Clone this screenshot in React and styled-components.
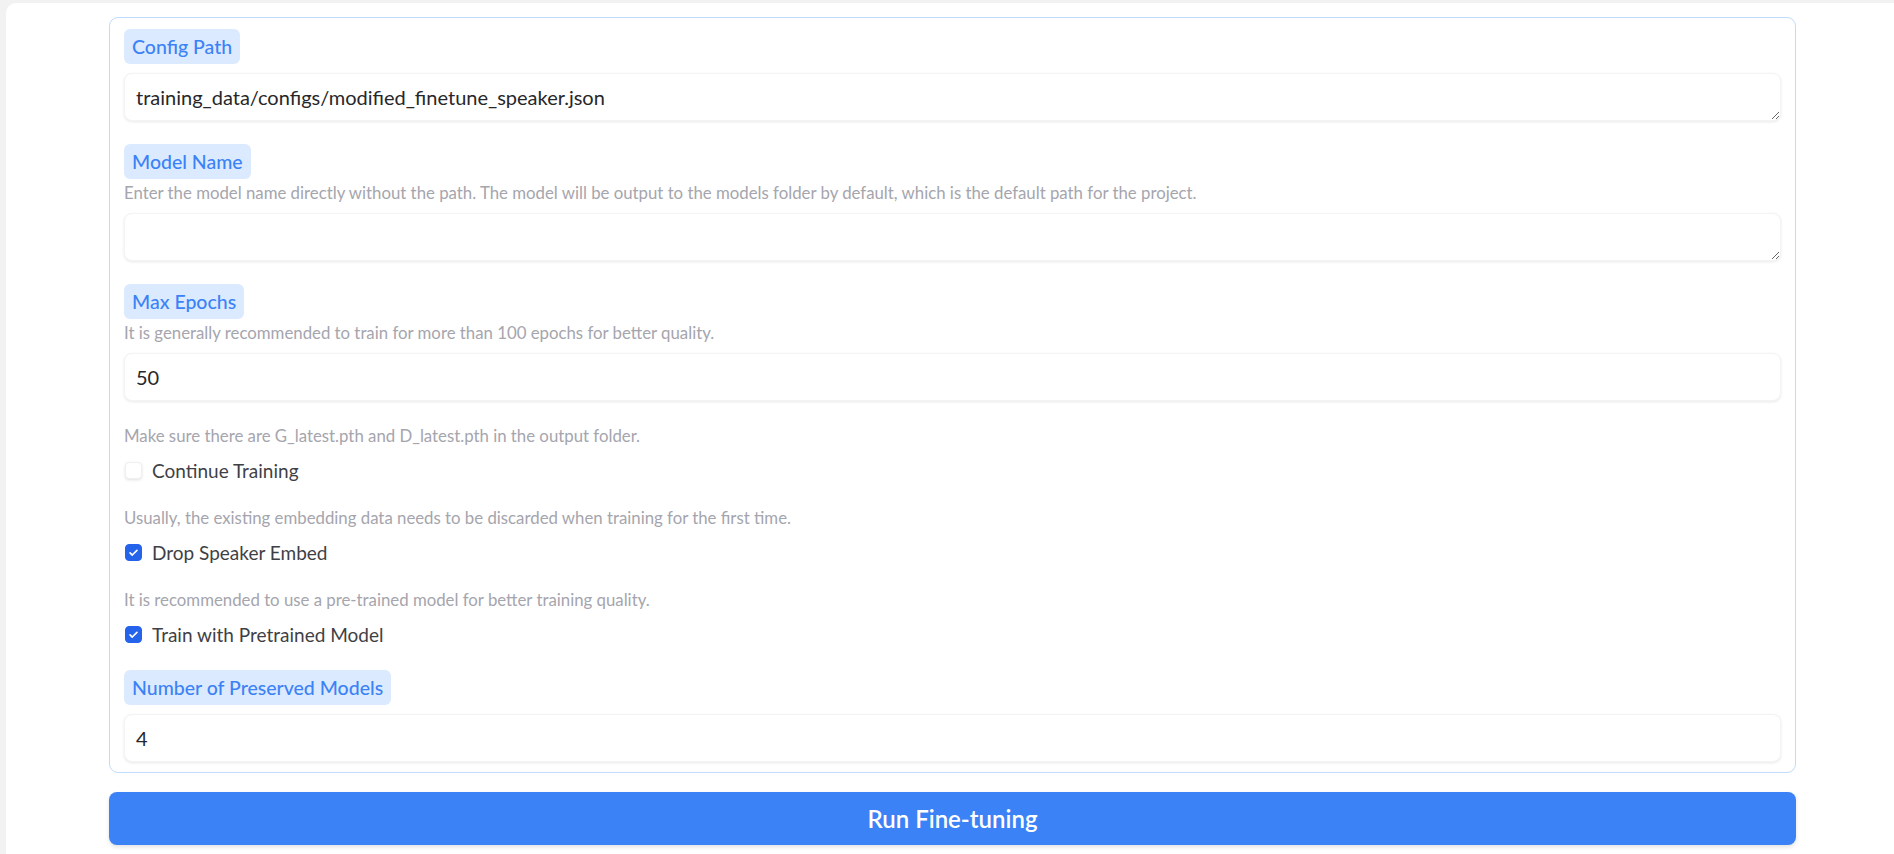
import styled, { createGlobalStyle } from "styled-components";

const GlobalStyle = createGlobalStyle`
  html, body {
    margin: 0;
    background: #f2f2f2;
    font-family: "Lato", "Noto Sans", sans-serif;
  }
`;

const fields = [
  {
    type: "textarea",
    label: "Config Path",
    value: "training_data/configs/modified_finetune_speaker.json",
  },
  {
    type: "textarea",
    label: "Model Name",
    info: "Enter the model name directly without the path. The model will be output to the models folder by default, which is the default path for the project.",
    value: "",
  },
  {
    type: "number",
    label: "Max Epochs",
    info: "It is generally recommended to train for more than 100 epochs for better quality.",
    value: "50",
  },
  {
    type: "checkbox",
    label: "Continue Training",
    info: "Make sure there are G_latest.pth and D_latest.pth in the output folder.",
    checked: false,
  },
  {
    type: "checkbox",
    label: "Drop Speaker Embed",
    info: "Usually, the existing embedding data needs to be discarded when training for the first time.",
    checked: true,
  },
  {
    type: "checkbox",
    label: "Train with Pretrained Model",
    info: "It is recommended to use a pre-trained model for better training quality.",
    checked: true,
  },
  {
    type: "number",
    label: "Number of Preserved Models",
    value: "4",
  },
];

export default function App() {
  return (
    <>
      <GlobalStyle />
      <Page>
        <Card>
          <Panel>
            {fields.map((f) =>
              f.type === "checkbox" ? (
                <CheckField key={f.label}>
                  <Info>{f.info}</Info>
                  <CheckRow>
                    <Box $checked={f.checked}>
                      {f.checked && (
                        <svg width="11" height="11" viewBox="0 0 16 16">
                          <path
                            d="M3 8.5l3.2 3.2L13 4.8"
                            fill="none"
                            stroke="#fff"
                            strokeWidth="2.4"
                            strokeLinecap="round"
                            strokeLinejoin="round"
                          />
                        </svg>
                      )}
                    </Box>
                    <CheckLabel>{f.label}</CheckLabel>
                  </CheckRow>
                </CheckField>
              ) : (
                <Field key={f.label}>
                  <Badge $hasInfo={!!f.info}>{f.label}</Badge>
                  {f.info && <Info>{f.info}</Info>}
                  {f.type === "textarea" ? (
                    <TextArea rows={1} defaultValue={f.value} />
                  ) : (
                    <NumberInput type="text" defaultValue={f.value} />
                  )}
                </Field>
              )
            )}
          </Panel>
          <RunButton>Run Fine-tuning</RunButton>
        </Card>
      </Page>
    </>
  );
}

const Page = styled.div`
  padding: 3px 0 0 6px;
  min-height: 100vh;
  box-sizing: border-box;
`;

const Card = styled.div`
  background: #ffffff;
  border-top-left-radius: 10px;
  padding: 14px 98px 20px 103px;
  min-height: 837px;
  box-sizing: border-box;
`;

const Panel = styled.div`
  border: 1px solid #bfdbfe;
  border-radius: 9px;
  padding: 11px 14px 10px 14px;
  display: flex;
  flex-direction: column;
  gap: 23px;
`;

const Field = styled.div`
  display: flex;
  flex-direction: column;
  align-items: flex-start;
`;

const CheckField = styled.div`
  display: flex;
  flex-direction: column;
  gap: 12px;
  padding: 2px 0 1px;
`;

const Badge = styled.span`
  display: inline-flex;
  align-items: center;
  height: 35px;
  padding: 0 8px;
  box-sizing: border-box;
  background: #dbeafe;
  border-radius: 6px;
  color: #3b82f6;
  font-size: 19.5px;
  font-weight: 500;
  margin-bottom: ${(p) => (p.$hasInfo ? 4 : 9)}px;
`;

const Info = styled.div`
  font-size: 16.8px;
  line-height: 20px;
  color: #a5a5ad;
  margin-bottom: 10px;
  ${CheckField} & {
    margin-bottom: 0;
  }
`;

const inputBase = `
  width: 100%;
  box-sizing: border-box;
  height: 48px;
  border: 1px solid #f3f4f6;
  border-radius: 8px;
  background: #ffffff;
  box-shadow: 0 1px 3px rgba(0, 0, 0, 0.09);
  padding: 0 11px;
  font-family: "Lato", "Noto Sans", sans-serif;
  font-size: 20px;
  color: #27272a;
  outline: none;
`;

const TextArea = styled.textarea`
  ${inputBase}
  min-height: 48px;
  padding-top: 12px;
  line-height: 22px;
  resize: vertical;
`;

const NumberInput = styled.input`
  ${inputBase}
`;

const CheckRow = styled.label`
  display: flex;
  align-items: center;
  gap: 10px;
  height: 24px;
`;

const Box = styled.span`
  width: 17px;
  height: 17px;
  margin-left: 1px;
  border-radius: 4px;
  display: flex;
  align-items: center;
  justify-content: center;
  background: ${(p) => (p.$checked ? "#2563eb" : "#ffffff")};
  box-shadow: ${(p) =>
    p.$checked ? "none" : "0 1px 3px rgba(0, 0, 0, 0.12)"};
  border: 1px solid ${(p) => (p.$checked ? "#2563eb" : "#f0f0f0")};
  box-sizing: border-box;
`;

const CheckLabel = styled.span`
  font-size: 19px;
  color: #3f3f46;
`;

const RunButton = styled.button`
  display: block;
  width: 100%;
  height: 53px;
  margin-top: 19px;
  border: none;
  border-radius: 8px;
  background: #3b82f6;
  color: #ffffff;
  font-family: "Lato", "Noto Sans", sans-serif;
  font-size: 24px;
  font-weight: 600;
  box-shadow: 0 2px 4px rgba(0, 0, 0, 0.12);
  cursor: pointer;
`;
